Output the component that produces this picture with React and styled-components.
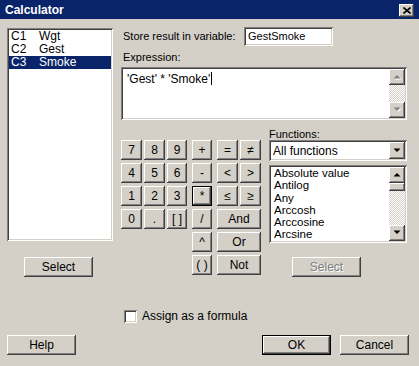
import styled, { createGlobalStyle } from "styled-components"

const GlobalStyle = createGlobalStyle`
    body {
        margin: 0;
        background: #d4d0c8;
        font-family: "Liberation Sans", Arial, sans-serif;
    }
`

const columns = [
    ["C1", "Wgt"],
    ["C2", "Gest"],
    ["C3", "Smoke"],
]

const functions = ["Absolute value", "Antilog", "Any", "Arccosh", "Arccosine", "Arcsine"]

function Arrow({ dir = "down", disabled }) {
    const pts = dir === "up" ? "0,4 7,4 3.5,0.5" : "0,0 7,0 3.5,3.5"
    return (
        <svg width="9" height="6" viewBox="0 0 9 6">
            {disabled && <polygon points={pts} fill="#fff" transform="translate(1.5 1.5)" />}
            <polygon points={pts} fill={disabled ? "#808080" : "#000"} transform="translate(0.5 0.5)" />
        </svg>
    )
}

export default function App() {
    return (
        <Window>
            <GlobalStyle />
            <TitleBar>
                <Title>Calculator</Title>
                <CloseButton>
                    <svg width="8" height="7" viewBox="0 0 8 7">
                        <path d="M0.5 0.5 L7.5 6.5 M7.5 0.5 L0.5 6.5" stroke="#000" strokeWidth="1.6" />
                    </svg>
                </CloseButton>
            </TitleBar>
            <Body>
                <Main>
                    <LeftCol>
                        <ColumnList>
                            {columns.map(([id, name], i) => (
                                <ColumnRow key={id} $selected={i === 2}>
                                    <ColId>{id}</ColId>
                                    <span>{name}</span>
                                </ColumnRow>
                            ))}
                        </ColumnList>
                        <Button $w={69} style={{ marginLeft: 17, marginTop: 16 }}>Select</Button>
                    </LeftCol>
                    <RightCol>
                        <StoreRow>
                            <Label>Store result in variable:</Label>
                            <TextField>GestSmoke</TextField>
                        </StoreRow>
                        <ExprLabel>Expression:</ExprLabel>
                        <ExprBox>
                            <ExprText>'Gest' * 'Smoke'<Caret /></ExprText>
                            <ScrollBar>
                                <ScrollBtn><Arrow dir="up" disabled /></ScrollBtn>
                                <Track />
                                <ScrollBtn><Arrow dir="down" disabled /></ScrollBtn>
                            </ScrollBar>
                        </ExprBox>
                        <LowerRow>
                            <Keypad>
                                <NumGrid>
                                    {["7", "8", "9", "4", "5", "6", "1", "2", "3", "0", ".", "[ ]"].map(k => (
                                        <KeyBtn key={k}>{k}</KeyBtn>
                                    ))}
                                </NumGrid>
                                <OpCol>
                                    {["+", "-", "*", "/", "^", "( )"].map(k => (
                                        <KeyBtn key={k} $default={k === "*"}>{k}</KeyBtn>
                                    ))}
                                </OpCol>
                                <LogicGrid>
                                    {["=", "≠", "<", ">", "≤", "≥"].map(k => (
                                        <KeyBtn key={k}>{k}</KeyBtn>
                                    ))}
                                    <KeyBtn $wide>And</KeyBtn>
                                    <KeyBtn $wide>Or</KeyBtn>
                                    <KeyBtn $wide>Not</KeyBtn>
                                </LogicGrid>
                            </Keypad>
                            <FuncPanel>
                                <FuncLabel>Functions:</FuncLabel>
                                <Dropdown>
                                    <span>All functions</span>
                                    <DropBtn><Arrow dir="down" /></DropBtn>
                                </Dropdown>
                                <FuncList>
                                    <FuncItems>
                                        {functions.map(f => <FuncItem key={f}>{f}</FuncItem>)}
                                    </FuncItems>
                                    <ScrollBar>
                                        <ScrollBtn><Arrow dir="up" /></ScrollBtn>
                                        <Track>
                                            <Thumb />
                                        </Track>
                                        <ScrollBtn><Arrow dir="down" /></ScrollBtn>
                                    </ScrollBar>
                                </FuncList>
                                <Button $w={69} $disabled style={{ marginLeft: 23, marginTop: 14 }}>Select</Button>
                            </FuncPanel>
                        </LowerRow>
                    </RightCol>
                </Main>
                <CheckRow>
                    <CheckBox />
                    <span>Assign as a formula</span>
                </CheckRow>
                <ButtonRow>
                    <Button $w={69}>Help</Button>
                    <RightButtons>
                        <Button $w={69} $default>OK</Button>
                        <Button $w={69}>Cancel</Button>
                    </RightButtons>
                </ButtonRow>
            </Body>
        </Window>
    )
}

const raised = `
    background: #d4d0c8;
    box-shadow: inset -1px -1px #404040, inset 1px 1px #fff, inset -2px -2px #808080;
`
const defaultRaised = `
    background: #d4d0c8;
    box-shadow: inset 0 0 0 1px #000, inset -2px -2px #404040, inset 2px 2px #fff, inset -3px -3px #808080;
`
const sunken = `
    background: #fff;
    box-shadow: inset 1px 1px #808080, inset -1px -1px #fff, inset 2px 2px #404040, inset -2px -2px #d4d0c8;
`

const Window = styled.div`
    width: 419px;
    height: 366px;
    background: #d4d0c8;
    font-size: 11px;
    color: #000;
    overflow: hidden;
`
const TitleBar = styled.div`
    height: 19px;
    background: #0a246a;
    display: flex;
    align-items: center;
    justify-content: space-between;
    padding: 0 5px 0 5px;
    box-sizing: border-box;
`
const Title = styled.div`
    color: #fff;
    font-weight: 700;
    font-size: 12px;
`
const CloseButton = styled.div`
    ${raised}
    width: 15px;
    height: 13px;
    display: flex;
    align-items: center;
    justify-content: center;
    margin-top: 1px;
`
const Body = styled.div`
    padding: 8px 0 0 7px;
`
const Main = styled.div`
    display: flex;
    gap: 8px;
`
const LeftCol = styled.div`
    width: 106px;
    display: flex;
    flex-direction: column;
`
const ColumnList = styled.div`
    ${sunken}
    margin-top: 1px;
    height: 213px;
    padding: 2px;
    box-sizing: border-box;
    font-size: 12px;
`
const ColumnRow = styled.div`
    display: flex;
    height: 13px;
    line-height: 13px;
    padding-left: 2px;
    background: ${p => (p.$selected ? "#0a246a" : "transparent")};
    color: ${p => (p.$selected ? "#fff" : "#000")};
`
const ColId = styled.span`
    width: 28px;
`
const RightCol = styled.div`
    width: 286px;
    display: flex;
    flex-direction: column;
`
const StoreRow = styled.div`
    display: grid;
    grid-template-columns: 123px 89px;
    align-items: center;
`
const Label = styled.div`
    padding-left: 2px;
    line-height: 13px;
`
const TextField = styled.div`
    ${sunken}
    height: 19px;
    line-height: 19px;
    padding-left: 4px;
    box-sizing: border-box;
`
const ExprLabel = styled(Label)`
    margin-top: 5px;
`
const ExprBox = styled.div`
    ${sunken}
    margin-top: 3px;
    height: 53px;
    padding: 2px;
    box-sizing: border-box;
    display: flex;
`
const ExprText = styled.div`
    flex: 1;
    padding: 3px 0 0 4px;
    font-size: 12px;
    line-height: 14px;
    display: flex;
    align-items: flex-start;
`
const Caret = styled.span`
    width: 1px;
    height: 13px;
    background: #000;
    margin-left: 1px;
`
const ScrollBar = styled.div`
    width: 16px;
    display: flex;
    flex-direction: column;
`
const ScrollBtn = styled.div`
    ${raised}
    height: 16px;
    display: flex;
    align-items: center;
    justify-content: center;
    flex-shrink: 0;
`
const Track = styled.div`
    flex: 1;
    background-color: #fff;
    background-image: conic-gradient(#d4d0c8 25%, #fff 0 50%, #d4d0c8 0 75%, #fff 0);
    background-size: 2px 2px;
`
const Thumb = styled.div`
    ${raised}
    height: 8px;
`
const LowerRow = styled.div`
    display: flex;
    margin-top: 8px;
`
const Keypad = styled.div`
    display: flex;
    padding-top: 12px;
`
const NumGrid = styled.div`
    display: grid;
    grid-template-columns: 21px 21px 20px;
    grid-auto-rows: 20px;
    gap: 3px 2px;
    align-content: start;
`
const OpCol = styled.div`
    display: grid;
    grid-template-columns: 20px;
    grid-auto-rows: 20px;
    row-gap: 3px;
    margin-left: 5px;
    align-content: start;
`
const LogicGrid = styled.div`
    display: grid;
    grid-template-columns: 21px 21px;
    grid-auto-rows: 20px;
    gap: 3px 2px;
    margin-left: 5px;
    align-content: start;
`
const KeyBtn = styled.div`
    ${p => (p.$default ? defaultRaised : raised)}
    display: flex;
    align-items: center;
    justify-content: center;
    font-size: 12px;
    grid-column: ${p => (p.$wide ? "span 2" : "auto")};
`
const FuncPanel = styled.div`
    margin-left: 8px;
    width: 138px;
    display: flex;
    flex-direction: column;
`
const FuncLabel = styled.div`
    line-height: 12px;
`
const Dropdown = styled.div`
    ${sunken}
    height: 21px;
    padding: 2px 2px 2px 4px;
    box-sizing: border-box;
    display: flex;
    align-items: center;
    justify-content: space-between;
    font-size: 12px;
`
const DropBtn = styled(ScrollBtn)`
    width: 16px;
    height: 17px;
`
const FuncList = styled.div`
    ${sunken}
    margin-top: 4px;
    height: 78px;
    padding: 2px;
    box-sizing: border-box;
    display: flex;
`
const FuncItems = styled.div`
    flex: 1;
    padding: 0 0 0 3px;
    overflow: hidden;
    font-size: 11.5px;
`
const FuncItem = styled.div`
    line-height: 12.3px;
`
const Button = styled.div`
    ${p => (p.$default ? defaultRaised : raised)}
    width: ${p => p.$w}px;
    height: 20px;
    display: flex;
    align-items: center;
    justify-content: center;
    color: ${p => (p.$disabled ? "#808080" : "#000")};
    text-shadow: ${p => (p.$disabled ? "1px 1px #fff" : "none")};
    font-size: 12px;
    flex-shrink: 0;
`
const CheckRow = styled.div`
    display: flex;
    align-items: center;
    gap: 5px;
    margin: 32px 0 0 117px;
    font-size: 12px;
`
const CheckBox = styled.div`
    ${sunken}
    width: 13px;
    height: 13px;
`
const ButtonRow = styled.div`
    display: flex;
    justify-content: space-between;
    margin-top: 12px;
    width: 402px;
`
const RightButtons = styled.div`
    display: flex;
    gap: 9px;
`
